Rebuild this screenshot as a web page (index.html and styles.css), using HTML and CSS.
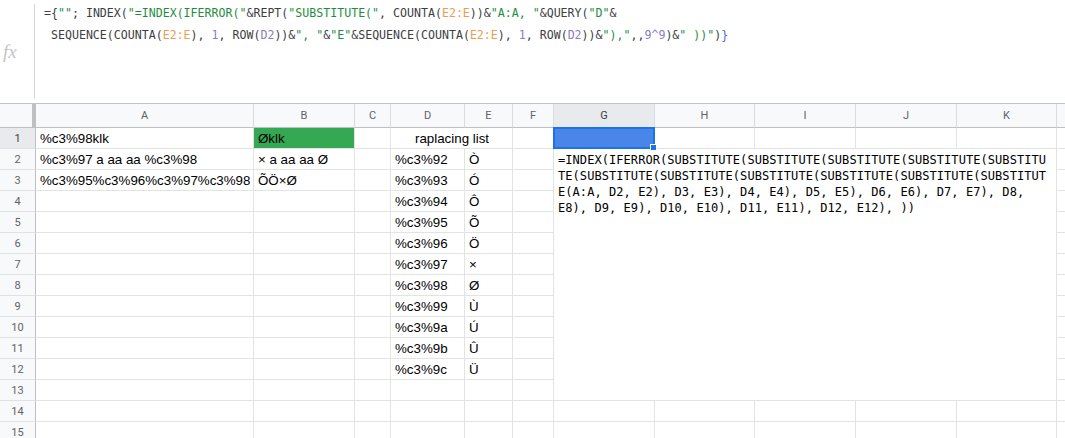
FILE: index.html
```html
<!DOCTYPE html>
<html lang="en">
<head>
  <meta charset="UTF-8" />
  <title>Sheet - replacing list</title>
  <link rel="stylesheet" href="styles.css">
</head>
<body>
  <!-- formula bar -->
  <div class="formula-bar">
    <div class="fx">fx</div>
    <div class="formula">
      <div class="line">={<span class="s">""</span>; INDEX(<span class="s">"=INDEX(IFERROR("</span>&amp;REPT(<span class="s">"SUBSTITUTE("</span>, COUNTA(<span class="r1">E2:E</span>))&amp;<span class="s">"A:A, "</span>&amp;QUERY(<span class="s">"D"</span>&amp;</div>
      <div class="line"> SEQUENCE(COUNTA(<span class="r1">E2:E</span>), <span class="n">1</span>, ROW(<span class="r2">D2</span>))&amp;<span class="s">", "</span>&amp;<span class="s">"E"</span>&amp;SEQUENCE(COUNTA(<span class="r1">E2:E</span>), <span class="n">1</span>, ROW(<span class="r2">D2</span>))&amp;<span class="s">"),"</span>,,<span class="n">9^9</span>)&amp;<span class="s">" ))"</span>)<span class="b">}</span></div>
    </div>
  </div>

  <!-- grid, filled by the script below -->
  <div class="sheet" id="sheet"></div>

  <script>
    const cols = ['A', 'B', 'C', 'D', 'E', 'F', 'G', 'H', 'I', 'J', 'K', 'L'];
    const rows = 15;

    const data = {
      A1: '%c3%98klk', B1: 'Øklk', D1: 'raplacing list',
      A2: '%c3%97 a aa aa %c3%98', B2: '× a aa aa Ø',
      A3: '%c3%95%c3%96%c3%97%c3%98', B3: 'ÕÖ×Ø'
    };
    const list = [
      ['%c3%92', 'Ò'], ['%c3%93', 'Ó'], ['%c3%94', 'Ô'], ['%c3%95', 'Õ'],
      ['%c3%96', 'Ö'], ['%c3%97', '×'], ['%c3%98', 'Ø'], ['%c3%99', 'Ù'],
      ['%c3%9a', 'Ú'], ['%c3%9b', 'Û'], ['%c3%9c', 'Ü']
    ];
    list.forEach(([code, ch], i) => {
      data['D' + (i + 2)] = code;
      data['E' + (i + 2)] = ch;
    });

    const formula = [
      '=INDEX(IFERROR(SUBSTITUTE(SUBSTITUTE(SUBSTITUTE(SUBSTITUTE(SUBSTITU',
      'TE(SUBSTITUTE(SUBSTITUTE(SUBSTITUTE(SUBSTITUTE(SUBSTITUTE(SUBSTITUT',
      'E(A:A, D2, E2), D3, E3), D4, E4), D5, E5), D6, E6), D7, E7), D8,',
      'E8), D9, E9), D10, E10), D11, E11), D12, E12), ))'
    ];

    // cells hidden under merged ranges (D1:E1 and G2:K13)
    function covered(c, r) {
      if (c === 'E' && r === 1) return true;
      const ci = cols.indexOf(c);
      if (ci >= 6 && ci <= 10 && r >= 2 && r <= 13) return !(c === 'G' && r === 2);
      return false;
    }

    const sheet = document.getElementById('sheet');
    function add(cls, text) {
      const el = document.createElement('div');
      el.className = cls;
      if (text) el.textContent = text;
      sheet.appendChild(el);
      return el;
    }

    add('corner');
    // the last column is only a sliver, its letter is off screen
    cols.forEach(c => add('col-head' + (c === 'G' ? ' active' : ''), c === 'L' ? '' : c));

    for (let r = 1; r <= rows; r++) {
      add('row-head' + (r === 1 ? ' active' : ''), String(r));
      cols.forEach(c => {
        if (covered(c, r)) return;
        const key = c + r;
        if (key === 'D1') return add('cell merge-list', data[key]);
        if (key === 'B1') return add('cell fill-green', data[key]);
        if (key === 'G1') {
          const sel = add('cell selected');
          sel.innerHTML = '<span class="handle"></span>';
          return;
        }
        if (key === 'G2') {
          const m = add('cell merge-formula');
          m.innerHTML = formula.join('<br>');
          return;
        }
        add('cell', data[key] || '');
      });
    }
  </script>
</body>
</html>
```

FILE: styles.css
```css
/* page */
body {
  margin: 0;
  background: #fff;
  font-family: "Liberation Sans", Arial, sans-serif;
  overflow: hidden;
}

/* formula bar */
.formula-bar {
  display: flex;
  height: 104px;
  box-sizing: border-box;
  border-bottom: 1px solid #c4c4c4;
}
.fx {
  width: 35px;
  box-sizing: border-box;
  margin: 4px 0;
  padding-left: 3px;
  border-right: 1px solid #d6d6d6;
  display: flex;
  align-items: center;
  font-family: "Liberation Serif", serif;
  font-style: italic;
  font-size: 19px;
  color: #c4c4c4;
}
.formula {
  padding: 2px 0 0 9px;
  font-family: "DejaVu Sans Mono", monospace;
  font-size: 11.6px;
  line-height: 22px;
  color: #3c4043;
}
.formula .line {
  white-space: pre;
}
.formula .s { color: #1e8e3e; }
.formula .r1 { color: #ee9d4c; }
.formula .r2 { color: #8e7cc3; }
.formula .n { color: #8a7bd0; }
.formula .b { color: #4a72c0; }

/* grid */
.sheet {
  display: grid;
  grid-template-columns: 36px 218px 101px 36px 74px 48px 41px 101px 100px 101px 101px 100px 100px;
  grid-template-rows: 24px repeat(15, 21px);
  overflow: hidden;
}
.corner {
  background: #f8f9fa;
  box-sizing: border-box;
  border-right: 4px solid #c0c0c0;
  border-bottom: 1px solid #c0c0c0;
}
.col-head,
.row-head {
  background: #f8f9fa;
  box-sizing: border-box;
  display: flex;
  align-items: center;
  justify-content: center;
  font-family: Roboto, "Liberation Sans", sans-serif;
  font-size: 11px;
  color: #5f6368;
}
.col-head {
  border-right: 1px solid #dadcdf;
  border-bottom: 1px solid #c0c0c0;
}
.row-head {
  border-right: 1px solid #c0c0c0;
  border-bottom: 1px solid #dfe1e3;
}
.col-head.active,
.row-head.active {
  background: #e8eaed;
  color: #3c4043;
}

.cell {
  box-sizing: border-box;
  border-right: 1px solid #e2e3e3;
  border-bottom: 1px solid #e2e3e3;
  padding: 0 3px 0 4px;
  display: flex;
  align-items: center;
  font-size: 13.33px;
  color: #000;
  white-space: nowrap;
  overflow: hidden;
}
.cell.fill-green {
  background: #34a853;
}
.cell.merge-list {
  grid-column: span 2;
  justify-content: center;
}
.cell.selected {
  position: relative;
  overflow: visible;
  background: #4a86e8;
}
.cell.selected::after {
  content: "";
  position: absolute;
  left: -1px; top: -1px; right: -1px; bottom: -1px;
  border: 2px solid #1a73e8;
}
.cell.selected .handle {
  position: absolute;
  right: -3px; bottom: -3px;
  width: 5px; height: 5px;
  background: #1a73e8;
  border: 1px solid #fff;
  z-index: 2;
}
.cell.merge-formula {
  grid-column: span 5;
  grid-row: span 12;
  display: block;
  padding: 3px 4px 0 4px;
  font-family: "DejaVu Sans Mono", monospace;
  font-size: 12px;
  letter-spacing: 0.06px;
  line-height: 16px;
}
```
